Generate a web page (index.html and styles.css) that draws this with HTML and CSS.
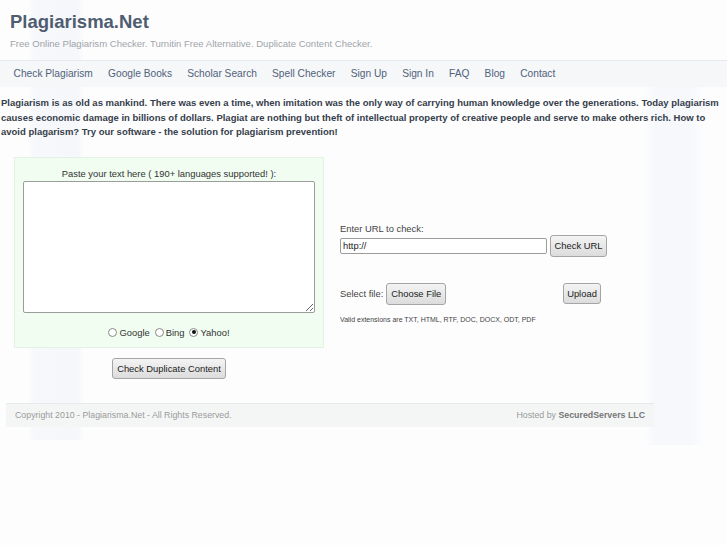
FILE: index.html
```html
<!DOCTYPE html>
<html>
<head>
<meta charset="utf-8">
<title>Plagiarisma.Net</title>
<link rel="stylesheet" href="styles.css">
</head>
<body>
<div class="header">
  <h1 class="logo">Plagiarisma.Net</h1>
  <p class="tagline">Free Online Plagiarism Checker. Turnitin Free Alternative. Duplicate Content Checker.</p>
</div>
<nav class="nav">
  <a href="#">Check Plagiarism</a>
  <a href="#">Google Books</a>
  <a href="#">Scholar Search</a>
  <a href="#">Spell Checker</a>
  <a href="#">Sign Up</a>
  <a href="#">Sign In</a>
  <a href="#">FAQ</a>
  <a href="#">Blog</a>
  <a href="#">Contact</a>
</nav>
<p class="intro">Plagiarism is as old as mankind. There was even a time, when imitation was the only way of carrying human knowledge over the generations. Today plagiarism causes economic damage in billions of dollars. Plagiat are nothing but theft of intellectual property of creative people and serve to make others rich. How to avoid plagarism? Try our software - the solution for plagiarism prevention!</p>

<div class="checker">
  <div class="left">
    <div class="textbox">
      <div class="label">Paste your text here ( 190+ languages supported! ):</div>
      <textarea class="area"></textarea>
      <div class="engines">
        <label class="eng"><input type="radio" name="e" class="radio"> Google</label>
        <label class="eng"><input type="radio" name="e" class="radio"> Bing</label>
        <label class="eng"><input type="radio" name="e" class="radio" checked> Yahoo!</label>
      </div>
    </div>
    <div class="submit-row"><button class="btn btn-dup">Check Duplicate Content</button></div>
  </div>
  <div class="right">
    <div class="small-label">Enter URL to check:</div>
    <div class="url-row">
      <input class="url" type="text" value="http://">
      <button class="btn btn-url">Check URL</button>
    </div>
    <div class="file-row">
      <span class="small-label">Select file:</span>
      <button class="btn btn-file">Choose File</button>
      <span class="spacer"></span>
      <button class="btn btn-up">Upload</button>
    </div>
    <div class="ext">Valid extensions are TXT, HTML, RTF, DOC, DOCX, ODT, PDF</div>
  </div>
</div>

<div class="footer">
  <span>Copyright 2010 - Plagiarisma.Net - All Rights Reserved.</span>
  <span>Hosted by <b>SecuredServers LLC</b></span>
</div>
</body>
</html>
```
FILE: styles.css
```css
html, body {
  margin: 0;
  padding: 0;
}
body {
  font-family: "Liberation Sans", Arial, sans-serif;
  color: #333;
  background-color: #fdfdfe;
  background-image:
    linear-gradient(90deg, transparent 0, transparent 28px, #f6f8fb 34px, #f5f7fa 78px, transparent 84px),
    linear-gradient(90deg, transparent 0, transparent 645px, #f6f8fb 655px, #f6f8fb 690px, transparent 705px, transparent 100%);
  background-repeat: no-repeat;
  background-size: 100% 440px, 100% 360px;
  background-position: 0 0, 0 85px;
  min-height: 545px;
}
.header {
  padding: 10px 0 0 10px;
  height: 50px;
  box-sizing: border-box;
}
.logo {
  margin: 0;
  font-size: 18.5px;
  line-height: 24px;
  font-weight: bold;
  color: #4e5d70;
}
.tagline {
  margin: 4px 0 0 0;
  font-size: 9.55px;
  line-height: 12px;
  color: #a0a4a8;
}
.nav {
  display: flex;
  border-top: 1px solid #e6eaef;
  background: #f5f7f9;
  height: 26px;
  align-items: center;
  padding-left: 6px;
  margin-top: 10px;
}
.nav a {
  font-size: 10.2px;
  line-height: 24px;
  color: #51627a;
  text-decoration: none;
  padding: 0 7.6px;
}
.intro {
  margin: 9px 2px 0 1px;
  font-size: 9.5px;
  line-height: 14.5px;
  font-weight: bold;
  color: #363e4a;
}
.checker {
  display: flex;
  margin-top: 17px;
  padding-left: 14px;
}
.left {
  width: 310px;
}
.textbox {
  background: #f0fdf0;
  border: 1px solid #e3f3e3;
  height: 191px;
  box-sizing: border-box;
  padding-top: 10px;
  display: flex;
  flex-direction: column;
  align-items: center;
}
.label {
  font-size: 9.4px;
  line-height: 11px;
  color: #333;
}
.area {
  width: 292px;
  height: 132px;
  box-sizing: border-box;
  margin: 2px 0 0 0;
  border: 1px solid #9c9c9c;
  border-radius: 2px;
  background: #fff;
  resize: both;
}
.engines {
  display: flex;
  margin-top: 14px;
  gap: 5px;
  font-size: 9.4px;
  color: #333;
}
.eng {
  display: flex;
  align-items: center;
  gap: 2px;
}
.radio {
  appearance: none;
  -webkit-appearance: none;
  width: 9px;
  height: 9px;
  margin: 0;
  border: 1px solid #8a8a8a;
  border-radius: 50%;
  background: #fff;
  position: relative;
}
.radio:checked::after {
  content: "";
  position: absolute;
  left: 1.5px;
  top: 1.5px;
  width: 4px;
  height: 4px;
  border-radius: 50%;
  background: #111;
}
.submit-row {
  display: flex;
  padding-left: 98px;
  margin-top: 10px;
}
.btn {
  font-family: "Liberation Sans", Arial, sans-serif;
  font-size: 9.4px;
  color: #222;
  background: linear-gradient(#f4f4f4, #dcdcdc);
  border: 1px solid #a5a5a5;
  border-radius: 3px;
  padding: 0;
  margin: 0;
  white-space: nowrap;
}
.btn-dup {
  width: 114px;
  height: 21px;
}
.right {
  padding-left: 16px;
  padding-top: 66px;
  width: 300px;
}
.small-label {
  font-size: 9.4px;
  line-height: 11px;
  color: #444;
}
.url-row {
  display: flex;
  align-items: center;
  gap: 3px;
  margin-top: 1px;
}
.url {
  width: 207px;
  height: 16px;
  box-sizing: border-box;
  border: 1px solid #9c9c9c;
  border-radius: 2px;
  padding: 0 2px;
  font-family: "Liberation Sans", Arial, sans-serif;
  font-size: 9.4px;
  color: #222;
  margin: 0;
}
.btn-url {
  width: 57px;
  height: 22px;
}
.file-row {
  display: flex;
  align-items: center;
  margin-top: 26px;
  width: 261px;
}
.btn-file {
  width: 60px;
  height: 22px;
  margin-left: 3px;
}
.spacer {
  flex: 1;
}
.btn-up {
  width: 38px;
  height: 21px;
}
.ext {
  font-size: 7px;
  color: #444;
  margin-top: 11px;
}
.footer {
  display: flex;
  justify-content: space-between;
  align-items: center;
  margin: 24px 0 0 6px;
  width: 648px;
  height: 24px;
  box-sizing: border-box;
  padding: 0 9px;
  background: #f4f6f6;
  border-top: 1px solid #e7eaea;
  font-size: 8.8px;
  color: #9a9a9a;
}
.footer b {
  color: #777;
}
```
